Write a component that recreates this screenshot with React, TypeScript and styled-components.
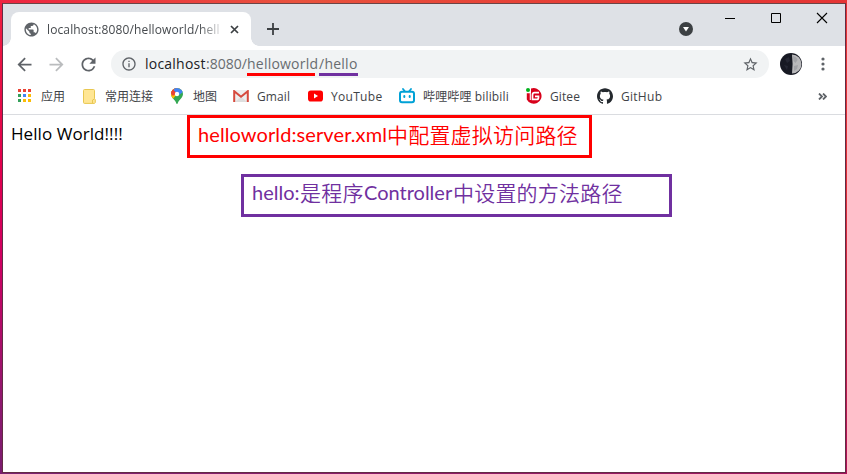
import React from "react";
import styled, { createGlobalStyle } from "styled-components";
import {
  MdArrowBack,
  MdArrowForward,
  MdRefresh,
  MdInfoOutline,
  MdStarBorder,
  MdPublic,
} from "react-icons/md";
import { SiGithub } from "react-icons/si";

const GlobalStyle = createGlobalStyle`
  * { box-sizing: border-box; }
  body { margin: 0; overflow: hidden; font-family: "Open Sans", "Noto Sans CJK SC", sans-serif; }
  svg { display: block; flex: none; }
`;

const Desktop = styled.div`
  width: 847px;
  height: 474px;
  padding: 3px 1px 1px 2px;
  background:
    linear-gradient(90deg, #ee2440, #e9523d 35%, #e63a34 75%, #e53535) top / 100% 3px no-repeat,
    linear-gradient(180deg, #f0203f, #e2004d 35%, #cf0062 55%, #8e1870 85%, #7a1b70) left / 2px 100% no-repeat,
    linear-gradient(180deg, #e63535, #e03038 40%, #b01058) right / 1px 100% no-repeat,
    linear-gradient(90deg, #7a2272, #a3155d);
`;

const Window = styled.div`
  display: flex;
  flex-direction: column;
  height: 470px;
  background: #fff;
  border: 1px solid #632b45;
  border-top-color: #6b4446;
`;

const TitleBar = styled.div`
  display: flex;
  height: 42px;
  padding-left: 8px;
  background: #dee1e6;
`;

const Tab = styled.div`
  position: relative;
  display: flex;
  align-items: center;
  width: 240px;
  height: 34px;
  margin-top: 8px;
  padding-left: 12px;
  border-radius: 8px 8px 0 0;
  background: #fff;
  color: #5f6368;
  &::before, &::after {
    content: "";
    position: absolute;
    bottom: 0;
    width: 8px;
    height: 8px;
  }
  &::before { left: -8px; background: radial-gradient(circle at 0 0, transparent 7.5px, #fff 8px); }
  &::after { right: -8px; background: radial-gradient(circle at 100% 0, transparent 7.5px, #fff 8px); }
`;

const TabTitle = styled.div`
  width: 175px;
  margin: 2px 0 0 7px;
  overflow: hidden;
  white-space: nowrap;
  font-size: 12px;
  line-height: 18px;
  letter-spacing: 0.12px;
  color: #45494d;
  mask-image: linear-gradient(90deg, #000 152px, transparent 178px);
`;

const TabClose = styled.div`
  margin-left: 8px;
  color: #3c4043;
`;

const NewTab = styled.div`
  margin: 19px 0 0 16px;
`;

const WindowControls = styled.div`
  display: flex;
  margin-left: auto;
`;

const TabSearch = styled.div`
  margin: 18px 14px 0 0;
`;

const ControlButton = styled.div`
  display: flex;
  justify-content: center;
  width: 46px;
  padding-top: 8px;
`;

const Toolbar = styled.div`
  display: flex;
  align-items: center;
  height: 36px;
  padding-left: 11px;
`;

const NavButton = styled.div<{ $muted?: boolean }>`
  width: 32px;
  color: ${(p) => (p.$muted ? "#babcbe" : "#5f6368")};
`;

const Omnibox = styled.div`
  display: flex;
  align-items: center;
  width: 658px;
  height: 28px;
  margin-left: 1px;
  padding: 0 10px;
  border-radius: 14px;
  background: #f1f3f4;
  color: #5f6368;
`;

const Address = styled.div`
  display: flex;
  flex: 1;
  margin-left: 8px;
  font-size: 14px;
  line-height: 24px;
  color: #686c70;
`;

const AddressPart = styled.span<{ $width: number; $spacing?: number; $host?: boolean; $underline?: string }>`
  position: relative;
  width: ${(p) => p.$width}px;
  white-space: nowrap;
  letter-spacing: ${(p) => p.$spacing ?? 0}px;
  color: ${(p) => (p.$host ? "#202124" : "inherit")};
  &::after {
    content: "";
    position: absolute;
    left: 0;
    right: 4px;
    bottom: 0;
    height: 3px;
    background: ${(p) => p.$underline ?? "transparent"};
  }
`;

const Avatar = styled.div`
  margin-left: 11px;
`;

const Menu = styled.div`
  margin-left: 19px;
`;

const Bookmarks = styled.div`
  display: flex;
  align-items: center;
  height: 33px;
  padding: 0 18px 4px 14px;
  border-bottom: 1px solid #dadce0;
`;

const Bookmark = styled.div<{ $width: number; $gap: number }>`
  display: flex;
  align-items: center;
  gap: ${(p) => p.$gap}px;
  width: ${(p) => p.$width}px;
`;

const BookmarkLabel = styled.span<{ $spacing?: number }>`
  padding-top: 1px;
  font-size: 12px;
  line-height: 18px;
  white-space: nowrap;
  letter-spacing: ${(p) => p.$spacing ?? 0}px;
  color: #3f4347;
`;

const Overflow = styled.div`
  margin-left: auto;
`;

const Page = styled.main`
  position: relative;
  flex: 1;
  padding: 7px 8px;
`;

const Greeting = styled.div`
  font-size: 17px;
  line-height: 24px;
  letter-spacing: 0.06px;
  color: #000;
`;

const Callout = styled.div<{ $left: number; $top: number; $width: number; $color: string; $pad: number }>`
  position: absolute;
  left: ${(p) => p.$left}px;
  top: ${(p) => p.$top}px;
  display: flex;
  width: ${(p) => p.$width}px;
  height: 43px;
  padding: ${(p) => p.$pad}px 0 0 8px;
  border: 3px solid ${(p) => p.$color};
  color: ${(p) => p.$color};
  white-space: nowrap;
  line-height: 28px;
`;

const CalloutLatin = styled.span<{ $width: number; $spacing?: number }>`
  width: ${(p) => p.$width}px;
  font-family: Lato, sans-serif;
  font-size: 20px;
  letter-spacing: ${(p) => p.$spacing ?? 0}px;
`;

const CalloutHan = styled.span<{ $width: number }>`
  width: ${(p) => p.$width}px;
  font-family: "Noto Sans CJK SC", sans-serif;
  font-weight: 350;
  font-size: 21px;
  letter-spacing: 0.2px;
`;

const AppsIcon = () => {
  const colors = ["#ea4335", "#ea4335", "#ea4335", "#34a05a", "#4285f4", "#fbbc05", "#34a05a", "#fbbc05", "#fbbc05"];
  return (
    <svg width="15" height="14" viewBox="0 0 15 14">
      {colors.map((c, i) => (
        <rect key={i} x={1 + (i % 3) * 5} y={Math.floor(i / 3) * 5} width="3" height="3" fill={c} />
      ))}
    </svg>
  );
};

const FolderIcon = () => (
  <svg width="13" height="15" viewBox="0 0 13 15">
    <path d="M.5 1.5Q.5.5 1.5.5h9q1 0 1 1v8.2l.8 1v2.8l-.8.9h-10q-1 0-1-1z" fill="#ffe694" stroke="#e8c750" />
    <path d="M9.5 14v-3l2-1" fill="none" stroke="#e8c750" />
  </svg>
);

const MapsIcon = () => (
  <svg width="12" height="16" viewBox="0 0 12 16">
    <clipPath id="pin">
      <path d="M6 0a6 6 0 0 1 6 6c0 2-1 3.2-2.2 4.8C8.200 12.700 7.200 13.500 6.600 15.500Q6 16.500 5.400 15.500C4.800 13.500 3.800 12.700 2.200 10.800 1 9.200 0 8 0 6a6 6 0 0 1 6-6z" />
    </clipPath>
    <g clipPath="url(#pin)">
      <path d="M0 0h12v16H0z" fill="#34a853" />
      <path d="M0 0h12L6 6 1.500 11.500 0 10z" fill="#fbbc04" />
      <path d="M0 0h6v3L3.500 7 0 5z" fill="#ea4335" />
      <path d="M3 0h9v4L8 7 3 3z" fill="#4285f4" />
      <path d="M0 3L1.700 1.500 5 4.500 2 8 0 6z" fill="#ea4335" />
    </g>
    <circle cx="6" cy="6" r="2.2" fill="#fff" />
  </svg>
);

const GmailIcon = () => (
  <svg width="16" height="12" viewBox="0 0 16 12">
    <path d="M1 0h14v12H1z" fill="#eee" />
    <path d="M2 12l6-5.500L14 12z" fill="#dedede" />
    <path d="M1.200 12V1.200L8 6.800l6.800-5.600V12" fill="none" stroke="#d64a3e" strokeWidth="2" />
  </svg>
);

const YouTubeIcon = () => (
  <svg width="15" height="12" viewBox="0 0 15 12">
    <rect y=".5" width="15" height="11" rx="2.800" fill="#f00" />
    <path d="M6 3.600v4.800L10 6z" fill="#fff" />
  </svg>
);

const BilibiliIcon = () => (
  <svg width="16" height="16" viewBox="0 0 16 16">
    <path d="M4 1l2 2.500M12 1l-2 2.500" stroke="#00a1d6" strokeWidth="1.800" strokeLinecap="round" />
    <rect x="1" y="3.800" width="14" height="10.400" rx="2" fill="#fff" stroke="#00a1d6" strokeWidth="2" />
    <path d="M5.300 8v1M10.700 8v1" stroke="#00a1d6" strokeWidth="2" strokeLinecap="round" />
  </svg>
);

const GiteeIcon = () => (
  <svg width="16" height="16" viewBox="0 0 16 16">
    <path d="M5 .6A7.800 7.800 0 1 1 .8 11.500V5H5z" fill="#d8001b" />
    <path d="M13 4.700H8.500Q6.500 4.700 6.500 7v4.400h4.300q1.700 0 1.700-2V8.300H9" fill="none" stroke="#fff" strokeWidth="1.700" />
    <path d="M0 4.700h4.300v7.400" fill="none" stroke="#fff" strokeWidth="1.100" />
    <circle cx="2" cy="2" r="2" fill="#00b11d" />
  </svg>
);

const MoonIcon = () => (
  <svg width="22" height="22" viewBox="0 0 22 22">
    <circle cx="11" cy="11" r="11" fill="#171923" />
    <path d="M12 1.500a9.500 9.500 0 0 1 0 19q1.200-9.500 0-19z" fill="#b9b9bb" />
    <path d="M13 3q4 1 4.500 4l-2 3-2-2z M14 13l4-1-1 4-3 2z" fill="#a2a3a7" />
    <path d="M5 6l4-2 1 4-3 2z M4 12l4 1-1 4z" fill="#252733" />
  </svg>
);

export default function App() {
  return (
    <>
      <GlobalStyle />
      <Desktop>
        <Window>
          <TitleBar>
            <Tab>
              <MdPublic size={17} />
              <TabTitle>localhost:8080/helloworld/hell</TabTitle>
              <TabClose>
                <svg width="9" height="9" viewBox="0 0 9 9">
                  <path d="M1 1l7 7M8 1L1 8" stroke="currentColor" strokeWidth="1.700" />
                </svg>
              </TabClose>
            </Tab>
            <NewTab>
              <svg width="12" height="12" viewBox="0 0 12 12">
                <path d="M6 0v12M0 6h12" stroke="#3c4043" strokeWidth="1.800" />
              </svg>
            </NewTab>
            <WindowControls>
              <TabSearch>
                <svg width="14" height="14" viewBox="0 0 14 14">
                  <circle cx="7" cy="7" r="7" fill="#3c4043" />
                  <path d="M4 5h6L7 9.500z" fill="#fff" />
                </svg>
              </TabSearch>
              <ControlButton>
                <svg width="12" height="12" viewBox="0 0 12 12">
                  <path d="M1 6.500h10" stroke="#000" />
                </svg>
              </ControlButton>
              <ControlButton>
                <svg width="12" height="12" viewBox="0 0 12 12">
                  <path d="M1.500 1.500h9v9h-9z" fill="none" stroke="#000" />
                </svg>
              </ControlButton>
              <ControlButton>
                <svg width="12" height="12" viewBox="0 0 12 12">
                  <path d="M1 1l10 10M11 1L1 11" stroke="#000" strokeWidth="1.100" />
                </svg>
              </ControlButton>
            </WindowControls>
          </TitleBar>
          <Toolbar>
            <NavButton><MdArrowBack size={21} /></NavButton>
            <NavButton $muted><MdArrowForward size={21} /></NavButton>
            <NavButton><MdRefresh size={21} /></NavButton>
            <Omnibox>
              <MdInfoOutline size={16} />
              <Address>
                <AddressPart $width={61} $spacing={0.22} $host>localhost</AddressPart>
                <AddressPart $width={41}>:8080/</AddressPart>
                <AddressPart $width={72} $spacing={0.22} $underline="#f00">helloworld</AddressPart>
                <AddressPart $width={43} $spacing={0.25} $underline="#7030a0">/hello</AddressPart>
              </Address>
              <MdStarBorder size={17} />
            </Omnibox>
            <Avatar><MoonIcon /></Avatar>
            <Menu>
              <svg width="4" height="14" viewBox="0 0 4 14">
                <circle cx="2" cy="2" r="1.600" fill="#5f6368" />
                <circle cx="2" cy="7" r="1.600" fill="#5f6368" />
                <circle cx="2" cy="12" r="1.600" fill="#5f6368" />
              </svg>
            </Menu>
          </Toolbar>
          <Bookmarks>
            <Bookmark $width={66} $gap={9}><AppsIcon /><BookmarkLabel>应用</BookmarkLabel></Bookmark>
            <Bookmark $width={88} $gap={9}><FolderIcon /><BookmarkLabel>常用连接</BookmarkLabel></Bookmark>
            <Bookmark $width={62} $gap={10}><MapsIcon /><BookmarkLabel>地图</BookmarkLabel></Bookmark>
            <Bookmark $width={75} $gap={8}><GmailIcon /><BookmarkLabel $spacing={0.1}>Gmail</BookmarkLabel></Bookmark>
            <Bookmark $width={91} $gap={8}><YouTubeIcon /><BookmarkLabel $spacing={0.3}>YouTube</BookmarkLabel></Bookmark>
            <Bookmark $width={127} $gap={8}><BilibiliIcon /><BookmarkLabel $spacing={0.14}>哔哩哔哩 bilibili</BookmarkLabel></Bookmark>
            <Bookmark $width={71} $gap={8}><GiteeIcon /><BookmarkLabel $spacing={0.1}>Gitee</BookmarkLabel></Bookmark>
            <Bookmark $width={80} $gap={8}><SiGithub size={16} color="#24292e" /><BookmarkLabel $spacing={0.28}>GitHub</BookmarkLabel></Bookmark>
            <Overflow>
              <svg width="9" height="7" viewBox="0 0 9 7">
                <path d="M1 .5l3 3-3 3M5 .5l3 3-3 3" fill="none" stroke="#5f6368" strokeWidth="1.800" />
              </svg>
            </Overflow>
          </Bookmarks>
          <Page>
            <Greeting>Hello World!!!!</Greeting>
            <Callout $left={184} $top={0} $width={405} $color="#ff0000" $pad={2}>
              <CalloutLatin $width={189} $spacing={0.1}>helloworld:server.xml</CalloutLatin>
              <CalloutHan $width={191}>中配置虚拟访问路径</CalloutHan>
            </Callout>
            <Callout $left={238} $top={59} $width={431} $color="#7030a0" $pad={1}>
              <CalloutLatin $width={48}>hello:</CalloutLatin>
              <CalloutHan $width={64}>是程序</CalloutHan>
              <CalloutLatin $width={89}>Controller</CalloutLatin>
              <CalloutHan $width={170}>中设置的方法路径</CalloutHan>
            </Callout>
          </Page>
        </Window>
      </Desktop>
    </>
  );
}
